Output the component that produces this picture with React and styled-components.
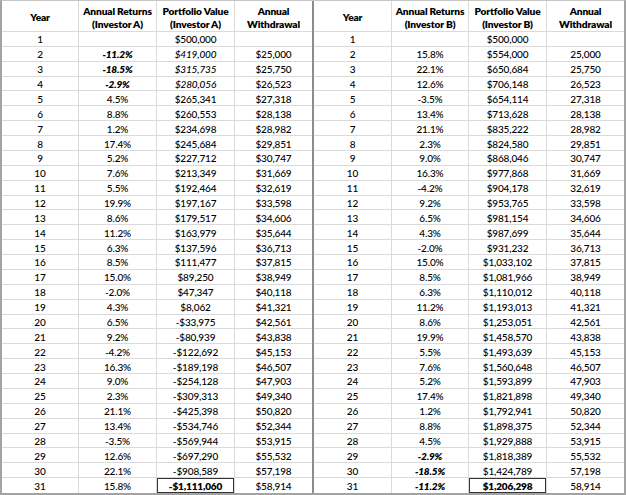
import React from 'react';
import styled, { createGlobalStyle } from 'styled-components';

const GlobalStyle = createGlobalStyle`
    html, body {
        margin: 0;
        padding: 0;
        background: #ffffff;
    }
    body {
        font-family: Lato, "Open Sans", "Liberation Sans", sans-serif;
        color: #000000;
    }
`;

// investor A: bad years first
const investorA = [
    ['1', '', '$500,000', ''],
    ['2', '-11.2%', '$419,000', '$25,000'],
    ['3', '-18.5%', '$315,735', '$25,750'],
    ['4', '-2.9%', '$280,056', '$26,523'],
    ['5', '4.5%', '$265,341', '$27,318'],
    ['6', '8.8%', '$260,553', '$28,138'],
    ['7', '1.2%', '$234,698', '$28,982'],
    ['8', '17.4%', '$245,684', '$29,851'],
    ['9', '5.2%', '$227,712', '$30,747'],
    ['10', '7.6%', '$213,349', '$31,669'],
    ['11', '5.5%', '$192,464', '$32,619'],
    ['12', '19.9%', '$197,167', '$33,598'],
    ['13', '8.6%', '$179,517', '$34,606'],
    ['14', '11.2%', '$163,979', '$35,644'],
    ['15', '6.3%', '$137,596', '$36,713'],
    ['16', '8.5%', '$111,477', '$37,815'],
    ['17', '15.0%', '$89,250', '$38,949'],
    ['18', '-2.0%', '$47,347', '$40,118'],
    ['19', '4.3%', '$8,062', '$41,321'],
    ['20', '6.5%', '-$33,975', '$42,561'],
    ['21', '9.2%', '-$80,939', '$43,838'],
    ['22', '-4.2%', '-$122,692', '$45,153'],
    ['23', '16.3%', '-$189,198', '$46,507'],
    ['24', '9.0%', '-$254,128', '$47,903'],
    ['25', '2.3%', '-$309,313', '$49,340'],
    ['26', '21.1%', '-$425,398', '$50,820'],
    ['27', '13.4%', '-$534,746', '$52,344'],
    ['28', '-3.5%', '-$569,944', '$53,915'],
    ['29', '12.6%', '-$697,290', '$55,532'],
    ['30', '22.1%', '-$908,589', '$57,198'],
    ['31', '15.8%', '-$1,111,060', '$58,914'],
];

// investor B: same returns, reversed order
const investorB = [
    ['1', '', '$500,000', ''],
    ['2', '15.8%', '$554,000', '25,000'],
    ['3', '22.1%', '$650,684', '25,750'],
    ['4', '12.6%', '$706,148', '26,523'],
    ['5', '-3.5%', '$654,114', '27,318'],
    ['6', '13.4%', '$713,628', '28,138'],
    ['7', '21.1%', '$835,222', '28,982'],
    ['8', '2.3%', '$824,580', '29,851'],
    ['9', '9.0%', '$868,046', '30,747'],
    ['10', '16.3%', '$977,868', '31,669'],
    ['11', '-4.2%', '$904,178', '32,619'],
    ['12', '9.2%', '$953,765', '33,598'],
    ['13', '6.5%', '$981,154', '34,606'],
    ['14', '4.3%', '$987,699', '35,644'],
    ['15', '-2.0%', '$931,232', '36,713'],
    ['16', '15.0%', '$1,033,102', '37,815'],
    ['17', '8.5%', '$1,081,966', '38,949'],
    ['18', '6.3%', '$1,110,012', '40,118'],
    ['19', '11.2%', '$1,193,013', '41,321'],
    ['20', '8.6%', '$1,253,051', '42,561'],
    ['21', '19.9%', '$1,458,570', '43,838'],
    ['22', '5.5%', '$1,493,639', '45,153'],
    ['23', '7.6%', '$1,560,648', '46,507'],
    ['24', '5.2%', '$1,593,899', '47,903'],
    ['25', '17.4%', '$1,821,898', '49,340'],
    ['26', '1.2%', '$1,792,941', '50,820'],
    ['27', '8.8%', '$1,898,375', '52,344'],
    ['28', '4.5%', '$1,929,888', '53,915'],
    ['29', '-2.9%', '$1,818,389', '55,532'],
    ['30', '-18.5%', '$1,424,789', '57,198'],
    ['31', '-11.2%', '$1,206,298', '58,914'],
];


const Sheet = styled.div`
    display: flex;
    width: 626px;
    height: 495px;
    box-sizing: border-box;
    border: 2px solid #a3a3a3;
    border-top: 1px solid #c6c6c6;
    background: #ffffff;
`;

const Divider = styled.div`
    width: 2px;
    flex: none;
    background: #8c8c8c;
`;

const Table = styled.div`
    flex: 1;
    display: grid;
    grid-template-columns: ${p => p.$cols};
    grid-template-rows: 31px repeat(31, 1fr);

    & > :nth-child(4n) {
        border-right: none;
    }
    & > :nth-last-child(-n+4) {
        border-bottom: none;
    }
`;

const Cell = styled.div`
    display: flex;
    align-items: center;
    justify-content: center;
    padding-top: 1px;
    box-sizing: border-box;
    min-height: 0;
    border-right: 1px solid #dadada;
    border-bottom: 1px solid #dadada;
    font-size: 10px;
    letter-spacing: -0.15px;
    white-space: nowrap;
    font-weight: ${p => (p.$bold ? 800 : 500)};
    font-style: ${p => (p.$italic ? 'italic' : 'normal')};
    box-shadow: ${p => (p.$boxed ? 'inset 0 0 0 1px #333333' : 'none')};
`;

const HeaderCell = styled(Cell)`
    padding-top: 3px;
    font-weight: 800;
    font-size: 10.2px;
    text-align: center;
    line-height: 13px;
`;


function SheetTable({ investor, rows, cols, emphasis }) {
    const last = rows.length - 1;
    return (
        <Table $cols={cols}>
            <HeaderCell>Year</HeaderCell>
            <HeaderCell>Annual Returns<br />(Investor {investor})</HeaderCell>
            <HeaderCell>Portfolio Value<br />(Investor {investor})</HeaderCell>
            <HeaderCell>Annual<br />Withdrawal</HeaderCell>
            {rows.map((row, i) => {
                const bad = emphasis.includes(i);
                return (
                    <React.Fragment key={row[0]}>
                        <Cell>{row[0]}</Cell>
                        <Cell $bold={bad} $italic={bad}>{row[1]}</Cell>
                        <Cell
                            $italic={bad && investor === 'A'}
                            $bold={i === last}
                            $boxed={i === last}
                        >
                            {row[2]}
                        </Cell>
                        <Cell>{row[3]}</Cell>
                    </React.Fragment>
                );
            })}
        </Table>
    );
}


export default function App() {
    return (
        <>
            <GlobalStyle />
            <Sheet>
                <SheetTable
                    investor="A"
                    rows={investorA}
                    cols="77px 78px 78px 77px"
                    emphasis={[1, 2, 3]}
                />
                <Divider />
                <SheetTable
                    investor="B"
                    rows={investorB}
                    cols="78px 77px 78px 77px"
                    emphasis={[28, 29, 30]}
                />
            </Sheet>
        </>
    );
}
